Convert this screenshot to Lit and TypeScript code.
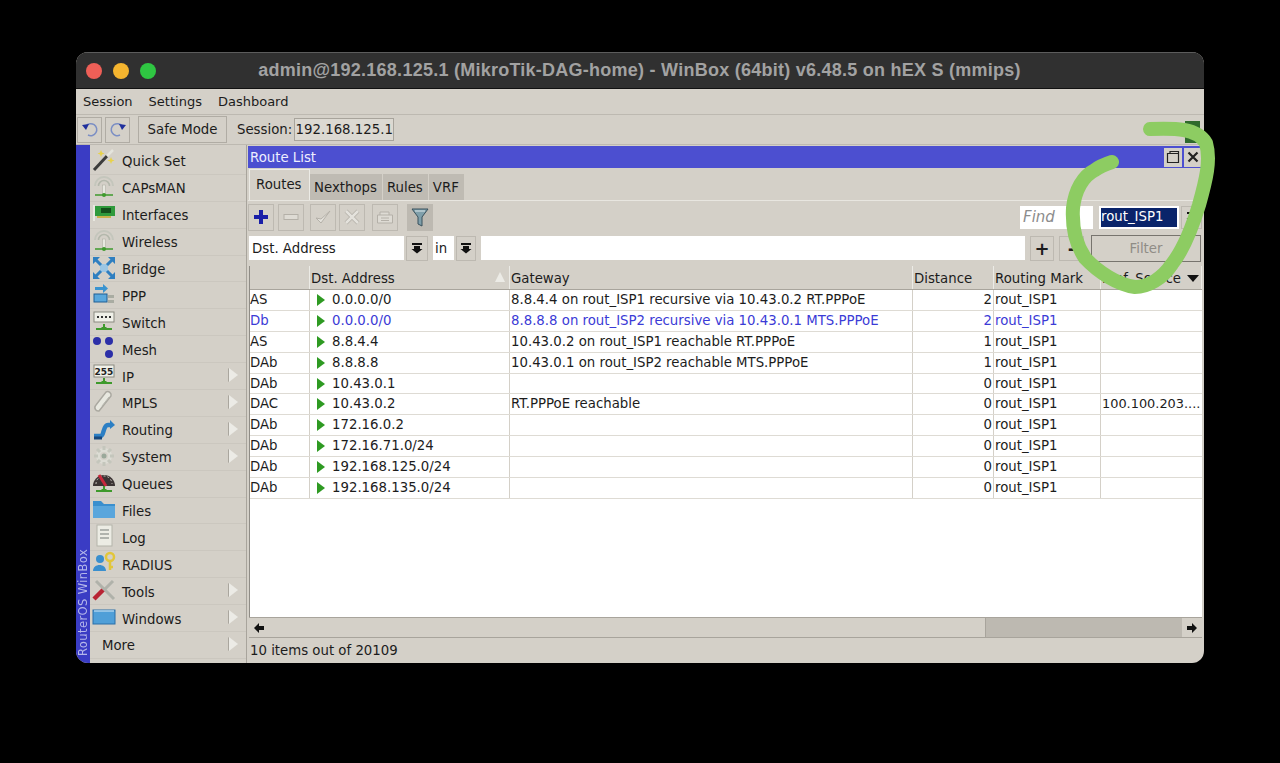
import { LitElement, html, css, svg } from "lit";
import { customElement } from "lit/decorators.js";

const antenna = svg`<path d="M3 11a9 9 0 0 1 18 0" fill="none" stroke="#c4c6bc" stroke-width="2"/><path d="M6.500 11a5.500 5.500 0 0 1 11 0" fill="none" stroke="#b4b8ac" stroke-width="1.600"/><rect x="10.500" y="10" width="3" height="9" fill="#e8e8e0" stroke="#a8a89c" stroke-width=".5"/><path d="M3 20h18" stroke="#3e9a2c" stroke-width="1.500"/><circle cx="12" cy="20" r="2" fill="#3e9a2c"/>`;

const stand = svg`<path d="M12 15v4M4 20h16" stroke="#3e9a2c" stroke-width="2"/><path d="M9 18h6l-3 3z" fill="#3e9a2c"/>`;

const icons: Record<string, unknown> = {
  wand: svg`<path d="M2 22 15 8" stroke="#3c3c3c" stroke-width="3"/><path d="M15 8l6-6" stroke="#e4e4dc" stroke-width="2.500"/><path d="M19 9l1 2.500 2.500 1-2.500 1-1 2.500-1-2.500-2.500-1 2.500-1zM9 2l1 2.500 2.500 1-2.500 1L9 9 8 6.500l-2.500-1 2.500-1z" fill="#e8d24a"/>`,
  antenna,
  card: svg`<rect x="3" y="4" width="20" height="10" fill="#2f9a3c"/><rect x="9" y="6" width="10" height="5" fill="#14501c"/><path d="M2 3v16" stroke="#e8e8e0" stroke-width="2"/><path d="M5 15h14" stroke="#c9b24c" stroke-width="2"/>`,
  bridge: svg`<rect x="8" y="8" width="8" height="8" fill="#9cc6e4"/><path d="M2 2l7 7M22 2l-7 7M2 22l7-7M22 22l-7-7" stroke="#2f7fc0" stroke-width="3"/><path d="M1 1h7L1 8zM23 1h-7l7 7zM1 23h7l-7-7zM23 23h-7l7-7z" fill="#2f7fc0"/>`,
  ppp: svg`<path d="M3 5h8V2l5 4.500-5 4.500V8H3z" fill="#3a94d0"/><rect x="2" y="12" width="13" height="8" fill="#5aa8dc" stroke="#1f5f94"/><rect x="16" y="13" width="6" height="3" fill="#a9aca2"/><rect x="16" y="18" width="6" height="3" fill="#a9aca2"/>`,
  sw: svg`<rect x="2" y="3" width="20" height="10" fill="#f0f0e8" stroke="#8a8a80"/><path d="M5 8h2M9 8h2M13 8h2M17 8h2" stroke="#333" stroke-width="2"/>${stand}`,
  mesh: svg`<circle cx="5" cy="5" r="4" fill="#2c2fa8"/><circle cx="17" cy="5" r="4" fill="#2c2fa8"/><circle cx="17" cy="18" r="4" fill="#2c2fa8"/>`,
  ip: svg`<rect x="2" y="2" width="20" height="12" fill="#f0f0e8" stroke="#8a8a80"/><text x="12" y="11.500" text-anchor="middle" font-size="9" font-weight="700" font-family="DejaVu Sans" fill="#222">255</text>${stand}`,
  mpls: svg`<path d="M7 21 19 6a3.500 3.500 0 0 0-5-4L4 15a3.500 3.500 0 0 0 3 6z" fill="#e8e8e0" stroke="#aaa8a0" stroke-width="1.500"/><path d="M10 16l7-9" stroke="#b8b8b0"/>`,
  routing: svg`<path d="M2 19h7c3 0 2-11 7-11h3" fill="none" stroke="#2c7fc4" stroke-width="4.500"/><path d="M2 21h8" stroke="#17477c" stroke-width="3"/><path d="M18 3l5 5-5 4z" fill="#2c7fc4"/>`,
  gear: svg`<circle cx="12" cy="12" r="6" fill="none" stroke="#dcdcd4" stroke-width="4"/><path d="M12 2v4M12 18v4M2 12h4M18 12h4M5 5l3 3M16 16l3 3M19 5l-3 3M5 19l3-3" stroke="#c4c6bc" stroke-width="3"/><circle cx="12" cy="12" r="2.500" fill="#9aa89a"/>`,
  gauge: svg`<path d="M1 15a11 11 0 0 1 22 0z" fill="#3c3434"/><path d="M4 13a8 8 0 0 1 16 0" fill="none" stroke="#c8c4bc" stroke-width="1" stroke-dasharray="2 2"/><path d="M7 4l7 11" stroke="#c8283c" stroke-width="3"/>${stand}`,
  folder: svg`<path d="M1 3h8l3 3h11v14H1z" fill="#3a8fce"/><path d="M1 8h22v12H1z" fill="#5aa6dc"/>`,
  log: svg`<rect x="5" y="1" width="15" height="21" fill="#ecece4" stroke="#b4b4aa"/><path d="M8 6h9M8 10h9M8 14h9" stroke="#9ca09a" stroke-width="1.500"/>`,
  radius: svg`<circle cx="8" cy="8" r="4" fill="#3a8fce"/><path d="M1 20c0-8 13-8 13 0z" fill="#3a8fce"/><circle cx="18" cy="6" r="4" fill="none" stroke="#e2c63a" stroke-width="2.500"/><path d="M18 10v9M18 16h3" stroke="#e2c63a" stroke-width="2.500"/>`,
  tools: svg`<path d="M4 3l18 18" stroke="#b0b2aa" stroke-width="3"/><path d="M21 3 11 13" stroke="#b0b2aa" stroke-width="3"/><path d="M2 21 11 12" stroke="#b82434" stroke-width="4.500"/>`,
  win: svg`<rect x="1" y="5" width="22" height="14" fill="#4f9fd8" stroke="#2a6fa8"/><path d="M2 6h20" stroke="#a8d0ec" stroke-width="1.500"/>`,
};

const menu: [string, string, boolean][] = [
  ["Quick Set", "wand", false],
  ["CAPsMAN", "antenna", false],
  ["Interfaces", "card", false],
  ["Wireless", "antenna", false],
  ["Bridge", "bridge", false],
  ["PPP", "ppp", false],
  ["Switch", "sw", false],
  ["Mesh", "mesh", false],
  ["IP", "ip", true],
  ["MPLS", "mpls", true],
  ["Routing", "routing", true],
  ["System", "gear", true],
  ["Queues", "gauge", false],
  ["Files", "folder", false],
  ["Log", "log", false],
  ["RADIUS", "radius", false],
  ["Tools", "tools", true],
  ["Windows", "win", true],
];

const routes = [
  ["AS", "0.0.0.0/0", "8.8.4.4 on rout_ISP1 recursive via 10.43.0.2 RT.PPPoE", "2", ""],
  ["Db", "0.0.0.0/0", "8.8.8.8 on rout_ISP2 recursive via 10.43.0.1 MTS.PPPoE", "2", ""],
  ["AS", "8.8.4.4", "10.43.0.2 on rout_ISP1 reachable RT.PPPoE", "1", ""],
  ["DAb", "8.8.8.8", "10.43.0.1 on rout_ISP2 reachable MTS.PPPoE", "1", ""],
  ["DAb", "10.43.0.1", "", "0", ""],
  ["DAC", "10.43.0.2", "RT.PPPoE reachable", "0", "100.100.203...."],
  ["DAb", "172.16.0.2", "", "0", ""],
  ["DAb", "172.16.71.0/24", "", "0", ""],
  ["DAb", "192.168.125.0/24", "", "0", ""],
  ["DAb", "192.168.135.0/24", "", "0", ""],
];

const dropArrow = html`<svg width="12" height="12" viewBox="0 0 12 12"><path d="M1 1h10v2H1zM3 4h6v3h2.500L6 11.500.5 7H3z" fill="#111"/></svg>`;

@customElement("app-root")
export class AppRoot extends LitElement {
  static styles = css`
    :host {
      display: block;
      position: relative;
      width: 1280px;
      height: 763px;
      background: #000;
      overflow: hidden;
      font-family: "DejaVu Sans", sans-serif;
      font-size: 13.3px;
      color: #1c1c1c;
    }
    .window {
      width: 1128px;
      height: 611px;
      margin-left: 76px;
      position: relative;
      top: 52px;
      display: flex;
      flex-direction: column;
      background: #d4d0c8;
      border-radius: 12px;
      overflow: hidden;
    }
    .titlebar {
      height: 37px;
      flex: none;
      display: flex;
      align-items: center;
      background: #303030;
      border-top: 1px solid #5c5c5c;
      box-sizing: border-box;
      border-bottom: 1px solid #111;
      padding-left: 10px;
      gap: 11px;
      position: relative;
    }
    .dot { width: 16px; height: 16px; border-radius: 50%; }
    .dot.red { background: #ee5f57; }
    .dot.amber { background: #f5b52f; }
    .dot.green { background: #2fc642; }
    .title {
      flex: 1;
      padding-right: 92px;
      text-align: center;
      font: 700 18px "Liberation Sans", sans-serif;
      letter-spacing: .25px;
      color: #a2a2a2;
    }
    .menubar {
      height: 26px;
      flex: none;
      display: flex;
      align-items: center;
      gap: 16px;
      padding: 0 7px;
      box-sizing: border-box;
      border-bottom: 1px solid #bdb9b1;
      font-size: 13px;
    }
    .toolbar {
      height: 30px;
      flex: none;
      display: flex;
      align-items: center;
      padding-left: 1px;
      gap: 3px;
      border-bottom: 1px solid #bdb9b1;
      box-sizing: border-box;
      position: relative;
    }
    .tbtn {
      width: 25px;
      height: 26px;
      display: flex;
      align-items: center;
      justify-content: center;
      border: 1px solid #b0aca4;
      box-sizing: border-box;
      flex: none;
    }
    .safe {
      width: 89px;
      margin-left: 5px;
      margin-right: 7px;
      text-align: center;
      line-height: 25px;
      height: 27px;
      border: 1px solid #b0aca4;
      box-sizing: border-box;
    }
    .session {
      height: 23px;
      line-height: 22px;
      width: 100px;
      box-sizing: border-box;
      text-align: center;
      background: #dcd9d2;
      border: 1px solid #a8a49c;
      margin-left: -1px;
    }
    .led {
      position: absolute;
      right: 4px;
      bottom: 1px;
      width: 15px;
      height: 22px;
      background: #2f6a2c;
    }
    .main { flex: 1; display: flex; min-height: 0; }
    .brand {
      width: 14px;
      flex: none;
      background: #3a3cc4;
      color: #b4b6ea;
      font-size: 11.500px;
      letter-spacing: .4px;
      writing-mode: vertical-rl;
      transform: rotate(180deg);
      line-height: 14px;
      padding-top: 7px;
      box-sizing: border-box;
    }
    .side {
      width: 157px;
      flex: none;
      padding-top: 3px;
      box-sizing: border-box;
      border-right: 1px solid #a8a49c;
    }
    .item {
      height: 26.900px;
      box-sizing: border-box;
      display: flex;
      align-items: center;
      border-bottom: 1px solid #cbc7bf;
      position: relative;
      padding-left: 2px;
    }
    .item svg.ic { width: 24px; height: 24px; flex: none; margin-right: 6px; position: relative; top: -1px; }
    .item span { padding-top: 2px; }
    .more { padding-left: 12px; }
    .chev {
      position: absolute;
      right: 8px;
      top: 5px;
      width: 0;
      height: 0;
      border-left: 9px solid #ecebe6;
      border-top: 7px solid transparent;
      border-bottom: 7px solid transparent;
      filter: drop-shadow(-1px 0 0 #aaa69e);
    }
    .panel {
      flex: 1;
      min-width: 0;
      display: flex;
      flex-direction: column;
      padding: 1px 2px 0 1px;
    }
    .phead {
      height: 22px;
      flex: none;
      display: flex;
      align-items: center;
      background: #4c4fd0;
      color: #eef;
      padding-left: 2px;
    }
    .phead .t { flex: 1; }
    .wbtn {
      width: 18px;
      height: 19px;
      margin-right: 2px;
      background: #d4d0c8;
      display: flex;
      align-items: center;
      justify-content: center;
      flex: none;
    }
    .wbtn:last-child { margin-right: 0; }
    .tabs { height: 32px; flex: none; display: flex; align-items: flex-end; padding-left: 1px; }
    .tab {
      height: 26px;
      line-height: 27px;
      padding: 0 5px 0 4px;
      background: #bfbbb3;
      border-right: 1px solid #d4d0c8;
    }
    .tab.on {
      height: 31px;
      line-height: 30px;
      background: #d4d0c8;
      padding: 0 6px;
      border: 1px solid #ecebe6;
      border-bottom: none;
      box-sizing: border-box;
      width: 61px;
    }
    .actions {
      height: 33px;
      flex: none;
      display: flex;
      align-items: center;
      border-top: 1px solid #e8e6e0;
      box-sizing: border-box;
    }
    .abtn {
      width: 26px;
      height: 27px;
      border: 1px solid #bdb9b1;
      box-sizing: border-box;
      display: flex;
      align-items: center;
      justify-content: center;
      flex: none;
    }
    .abtn.add { margin-right: 4px; }
    .abtn.del { margin-right: 6px; }
    .abtn.ok { margin-right: 3px; }
    .abtn.no { margin-right: 7px; }
    .abtn.note { margin-right: 9px; }
    .abtn.act { background: #bdb9b1; }
    .find {
      margin-left: auto;
      width: 73px;
      height: 23px;
      line-height: 22px;
      padding-left: 3px;
      box-sizing: border-box;
      background: #fff;
      color: #8c8c8c;
      font-style: italic;
      font-size: 15px;
    }
    .combo {
      width: 80px;
      height: 23px;
      margin-left: 6px;
      padding: 2px;
      box-sizing: border-box;
      background: #fff;
      flex: none;
    }
    .combo span {
      display: block;
      height: 19px;
      line-height: 18px;
      background: #0a246a;
      color: #fff;
    }
    .cdrop {
      width: 21px;
      height: 23px;
      margin-left: 2px;
      border: 1px solid #bdb9b1;
      box-sizing: border-box;
      flex: none;
      display: flex;
      align-items: center;
      justify-content: center;
    }
    .filter {
      height: 30px;
      flex: none;
      display: flex;
      align-items: center;
      padding-left: 1px;
    }
    .field {
      height: 24px;
      line-height: 26px;
      padding-left: 3px;
      box-sizing: border-box;
      background: #fff;
      flex: none;
    }
    .field.prop { width: 155px; }
    .field.op { width: 21px; margin-left: 5px; padding-left: 2px; }
    .field.val { width: 544px; margin-left: 5px; }
    .fbtn {
      width: 22px;
      height: 25px;
      margin-left: 2px;
      border: 1px solid #bdb9b1;
      box-sizing: border-box;
      display: flex;
      align-items: center;
      justify-content: center;
      flex: none;
      font-weight: 700;
      font-size: 18px;
    }
    .fbtn.narrow { width: 20px; }
    .fbtn.plus { width: 24px; margin-left: 5px; }
    .fbtn.minus { width: 25px; margin-left: 5px; }
    .fgo {
      width: 110px;
      height: 27px;
      line-height: 25px;
      margin-left: 7px;
      text-align: center;
      color: #8f8c86;
      border: 1px solid #77746e;
      box-sizing: border-box;
      flex: none;
    }
    .table {
      flex: 1;
      min-height: 0;
      margin-top: 3px;
      margin-left: 1px;
      background: #fff;
      border-left: 1px solid #8f8c86;
      overflow: hidden;
    }
    .tr {
      display: grid;
      grid-template-columns: 60px 200px 403px 81px 107px 1fr;
      height: 20.900px;
      line-height: 20px;
      border-bottom: 1px solid #dedbd4;
      box-sizing: border-box;
      white-space: nowrap;
    }
    .tr > div {
      border-right: 1px solid #d4d0c8;
      padding-left: 1px;
      overflow: hidden;
      position: relative;
    }
    .tr > div:first-child { padding-left: 0; }
    .tr > div:last-child { border-right: none; font-size: 12.900px; }
    .tr.head {
      height: 24px;
      line-height: 26px;
      background: #d4d0c8;
      border-bottom: 1px solid #a8a49c;
    }
    .tr.head > div { border-right: 1px solid #ecebe6; }
    .tr.head > div:last-child { font-size: 13.300px; }
    .tr.sel { color: #3b3bd6; }
    .dst { display: flex; align-items: center; gap: 7px; padding-left: 7px !important; }
    .play {
      width: 0;
      height: 0;
      border-left: 8px solid #2e9a22;
      border-top: 6px solid transparent;
      border-bottom: 6px solid transparent;
      flex: none;
    }
    .num { text-align: right; padding-right: 1px; }
    .sort {
      position: absolute;
      right: 4px;
      top: 6px;
      width: 0;
      height: 0;
      border-bottom: 10px solid #ecebe6;
      border-left: 5px solid transparent;
      border-right: 5px solid transparent;
    }
    .colmenu {
      position: absolute;
      right: 2px;
      top: 9px;
      width: 0;
      height: 0;
      border-top: 7px solid #111;
      border-left: 6px solid transparent;
      border-right: 6px solid transparent;
    }
    .hscroll {
      height: 21px;
      flex: none;
      margin-left: 1px;
      display: flex;
      align-items: center;
      background: #bdb9b1;
      border-top: 1px solid #a8a49c;
      border-bottom: 1px solid #a8a49c;
      box-sizing: border-box;
    }
    .sb {
      width: 20px;
      height: 19px;
      background: #d4d0c8;
      display: flex;
      align-items: center;
      justify-content: center;
      flex: none;
    }
    .thumb { width: 716px; height: 19px; background: #d4d0c8; border-right: 1px solid #a8a49c; flex: none; }
    .track { flex: 1; }
    .status {
      height: 25px;
      flex: none;
      line-height: 25px;
      padding-left: 2px;
    }
    .scribble {
      position: absolute;
      left: 0;
      top: 0;
      pointer-events: none;
    }
  `;

  render() {
    return html`
      <div class="window">
        <div class="titlebar">
          <div class="dot red"></div>
          <div class="dot amber"></div>
          <div class="dot green"></div>
          <div class="title">admin@192.168.125.1 (MikroTik-DAG-home) - WinBox (64bit) v6.48.5 on hEX S (mmips)</div>
        </div>
        <div class="menubar"><span>Session</span><span>Settings</span><span>Dashboard</span></div>
        <div class="toolbar">
          <div class="tbtn">
            <svg width="18" height="16" viewBox="0 0 18 16"><path d="M5 4a6 6 0 1 1 2 9" fill="none" stroke="#7c8fc4" stroke-width="1.500"/><path d="M1 3l7-1-3 6z" fill="#1f2f9c"/></svg>
          </div>
          <div class="tbtn">
            <svg width="18" height="16" viewBox="0 0 18 16"><path d="M13 4a6 6 0 1 0-2 9" fill="none" stroke="#7c8fc4" stroke-width="1.500"/><path d="M17 3l-7-1 3 6z" fill="#1f2f9c"/></svg>
          </div>
          <div class="safe">Safe Mode</div>
          <span>Session:</span>
          <div class="session">192.168.125.1</div>
          <div class="led"></div>
        </div>
        <div class="main">
          <div class="brand">RouterOS WinBox</div>
          <div class="side">
            ${menu.map(
              ([label, ic, sub]) => html`<div class="item">
                <svg class="ic" viewBox="0 0 24 24">${icons[ic]}</svg>
                <span>${label}</span>
                ${sub ? html`<div class="chev"></div>` : ""}
              </div>`
            )}
            <div class="item more"><span>More</span><div class="chev"></div></div>
          </div>
          <div class="panel">
            <div class="phead">
              <div class="t">Route List</div>
              <div class="wbtn"><svg width="14" height="14" viewBox="0 0 14 14"><path d="M1.500 3.500h11v9h-11zM4 3.500V1.500h8.500v7" fill="none" stroke="#222" stroke-width="1.200"/></svg></div>
              <div class="wbtn"><svg width="12" height="12" viewBox="0 0 12 12"><path d="M1.500 1.500l9 9M10.500 1.500l-9 9" stroke="#222" stroke-width="2.200"/></svg></div>
            </div>
            <div class="tabs">
              <div class="tab on">Routes</div>
              <div class="tab">Nexthops</div>
              <div class="tab">Rules</div>
              <div class="tab">VRF</div>
            </div>
            <div class="actions">
              <div class="abtn add"><svg width="16" height="16" viewBox="0 0 16 16"><path d="M6 1h4v5h5v4h-5v5H6v-5H1V6h5z" fill="#1a1fa8"/></svg></div>
              <div class="abtn del"><svg width="16" height="8" viewBox="0 0 16 8"><rect x="1" y="1.500" width="14" height="5" fill="#dedbd4" stroke="#b4b0a8"/></svg></div>
              <div class="abtn ok"><svg width="18" height="18" viewBox="0 0 18 18"><path d="M2 10l5 5 9-12-9 8z" fill="#e4e2dc" stroke="#b4b0a8"/></svg></div>
              <div class="abtn no"><svg width="16" height="16" viewBox="0 0 16 16"><path d="M2 2l12 12M14 2 2 14" stroke="#b4b0a8" stroke-width="4"/><path d="M2 2l12 12M14 2 2 14" stroke="#e4e2dc" stroke-width="2.500"/></svg></div>
              <div class="abtn note"><svg width="18" height="16" viewBox="0 0 18 16"><path d="M1.500 6h15v8h-15zM4 6V3h9v3" fill="#dedbd4" stroke="#b4b0a8"/><path d="M5 9h8M5 11.500h8" stroke="#b4b0a8"/></svg></div>
              <div class="abtn act"><svg width="18" height="19" viewBox="0 0 18 19"><path d="M1 1h16l-6 8v9l-4-2V9z" fill="#7f9faa" stroke="#39505c"/><path d="M4 3h10" stroke="#dfe8ea"/></svg></div>
              <div class="find">Find</div>
              <div class="combo"><span>rout_ISP1</span></div>
              <div class="cdrop">${dropArrow}</div>
            </div>
            <div class="filter">
              <div class="field prop">Dst. Address</div>
              <div class="fbtn">${dropArrow}</div>
              <div class="field op">in</div>
              <div class="fbtn narrow">${dropArrow}</div>
              <div class="field val"></div>
              <div class="fbtn plus">+</div>
              <div class="fbtn minus">-</div>
              <div class="fgo">Filter</div>
            </div>
            <div class="table">
              <div class="tr head">
                <div></div>
                <div>Dst. Address<span class="sort"></span></div>
                <div>Gateway</div>
                <div>Distance</div>
                <div>Routing Mark</div>
                <div>Pref. Source<span class="colmenu"></span></div>
              </div>
              ${routes.map(
                (r) => html`<div class="tr ${r[0] === "Db" ? "sel" : ""}">
                  <div>${r[0]}</div>
                  <div class="dst"><span class="play"></span>${r[1]}</div>
                  <div>${r[2]}</div>
                  <div class="num">${r[3]}</div>
                  <div>rout_ISP1</div>
                  <div>${r[4]}</div>
                </div>`
              )}
            </div>
            <div class="hscroll">
              <div class="sb"><svg width="10" height="10" viewBox="0 0 10 10"><path d="M0 5l5-5v3h5v4H5v3z" fill="#111"/></svg></div>
              <div class="thumb"></div>
              <div class="track"></div>
              <div class="sb"><svg width="10" height="10" viewBox="0 0 10 10"><path d="M10 5 5 0v3H0v4h5v3z" fill="#111"/></svg></div>
            </div>
            <div class="status">10 items out of 20109</div>
          </div>
        </div>
      </div>
      <svg class="scribble" width="1280" height="763" viewBox="0 0 1280 763">
        <path d="M1150 129C1175 128 1197 128 1206 143C1211 160 1206 180 1199 205C1192 228 1183 250 1172 264C1162 279 1148 287 1135 287C1118 285 1098 272 1085 258C1075 243 1072 225 1073 208C1075 190 1083 176 1095 170C1100 166 1106 164 1112 162" fill="none" stroke="#8dcc62" stroke-width="14" stroke-linecap="round" stroke-linejoin="round"/>
      </svg>
    `;
  }
}
